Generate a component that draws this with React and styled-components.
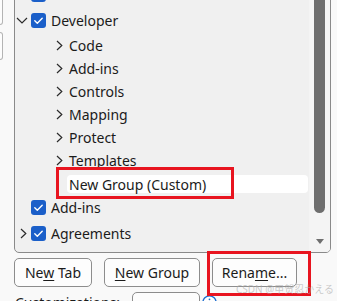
import React from 'react';
import styled, { createGlobalStyle } from 'styled-components';

const GlobalStyle = createGlobalStyle`
  html, body { margin: 0; padding: 0; background: #f9f9f9; }
  body { font-family: "Noto Sans", "Segoe UI", sans-serif; color: #1b1b1b; }
  * { box-sizing: border-box; }
`;

const Page = styled.div`
  position: relative;
  width: 337px;
  height: 301px;
  overflow: hidden;
  display: flex;
  flex-direction: column;
`;

const TopRow = styled.div`
  display: flex;
  align-items: flex-start;
`;

const LeftRail = styled.div`
  width: 14px;
  flex: none;
  display: flex;
  flex-direction: column;
  gap: 7px;
`;

const Stub = styled.div`
  width: 3px;
  height: ${p => p.$h}px;
  margin-top: ${p => p.$mt || 0}px;
  border: 1px solid #b4b4b4;
  border-left: none;
  border-radius: 0 4px 4px 0;
  background: #fdfdfd;
`;

const ListBox = styled.div`
  width: 317px;
  height: 273px;
  margin-top: -20px;
  border: 1px solid #8a8a8a;
  border-radius: 0 0 5px 5px;
  background: #f0f0f0;
  display: flex;
  overflow: hidden;
`;

const Tree = styled.div`
  flex: 1;
  display: flex;
  flex-direction: column;
  overflow: hidden;
`;

const Row = styled.div`
  flex: none;
  height: ${p => p.$h}px;
  display: flex;
  align-items: center;
  padding-left: ${p => p.$indent}px;
  font-size: 14px;
  white-space: nowrap;
  margin-top: ${p => p.$mt || 0}px;
`;

const Highlight = styled.div`
  flex: 1;
  align-self: stretch;
  margin: 3px 1px 2px 0;
  padding-left: 2px;
  background: #ffffff;
  border-radius: 4px;
  display: flex;
  align-items: center;
`;

const ChevronSlot = styled.span`
  width: ${p => p.$w}px;
  flex: none;
  display: flex;
  align-items: center;
  justify-content: ${p => p.$justify || 'flex-start'};
`;

const Check = styled.span`
  width: 15px;
  height: 15px;
  border-radius: 3px;
  background: #1b5fc9;
  display: inline-flex;
  align-items: center;
  justify-content: center;
  flex: none;
  margin-right: 5px;
`;

const Scrollbar = styled.div`
  width: 21px;
  flex: none;
  background: #f4f4f4;
  display: flex;
  flex-direction: column;
  padding-left: 5px;
`;

const Thumb = styled.div`
  width: 11px;
  height: 232px;
  background: #6e6e6e;
  border-radius: 6px;
`;

const ArrowSlot = styled.div`
  width: 11px;
  margin-top: 26px;
  display: flex;
  justify-content: center;
`;

const ButtonRow = styled.div`
  display: flex;
  gap: 12px;
  padding-left: 14px;
  margin-top: 5px;
`;

const Button = styled.button`
  height: 29px;
  width: ${p => p.$w}px;
  border: 1px solid #8d8d8d;
  border-radius: 5px;
  background: #fdfdfd;
  font-family: "Noto Sans", sans-serif;
  font-size: 14px;
  color: #1b1b1b;
  padding: 0;
  u { text-decoration-thickness: 1px; text-underline-offset: 2px; }
`;

const BottomRow = styled.div`
  display: flex;
  align-items: flex-start;
  margin-top: 5px;
  padding-left: 15px;
`;

const Label = styled.span`
  font-size: 14px;
  line-height: 20px;
  margin-top: 1px;
  width: 117px;
`;

const Dropdown = styled.div`
  width: 68px;
  height: 29px;
  border: 1px solid #8d8d8d;
  border-radius: 5px;
  background: #fdfdfd;
`;

const InfoSlot = styled.div`
  margin-left: 2px;
  margin-top: 1px;
  width: 15px;
  height: 15px;
`;

const Annotation = styled.div`
  position: absolute;
  left: ${p => p.$x}px;
  top: ${p => p.$y}px;
  width: ${p => p.$w}px;
  height: ${p => p.$h}px;
  border: 3px solid #e8141f;
  pointer-events: none;
`;

const Watermark = styled.div`
  position: absolute;
  left: 236px;
  top: 282px;
  font-family: "Noto Sans", "Noto Sans CJK SC", sans-serif;
  font-size: 10px;
  line-height: 14px;
  color: rgba(170, 170, 170, 0.6);
  white-space: nowrap;
`;

const DownChevron = () => (
  <svg width="12" height="7" viewBox="0 0 12 7">
    <path d="M1 1 L6 6 L11 1" fill="none" stroke="#2b2b2b" strokeWidth="1.2" />
  </svg>
);

const RightChevron = () => (
  <svg width="7" height="11" viewBox="0 0 7 11">
    <path d="M1 1 L5.8 5.5 L1 10" fill="none" stroke="#2b2b2b" strokeWidth="1.2" />
  </svg>
);

const CheckMark = () => (
  <svg width="15" height="15" viewBox="0 0 15 15">
    <path d="M3.8 7.8 L6.3 10.2 L11.2 5.2" fill="none" stroke="#fff" strokeWidth="1.4" strokeLinecap="round" strokeLinejoin="round" />
  </svg>
);

const TopItem = ({ label, expand, h = 26, mt }) => (
  <Row $h={h} $indent={1} $mt={mt}>
    <ChevronSlot $w={15} $justify={expand === 'right' ? 'center' : 'flex-start'}>
      {expand === 'down' && <DownChevron />}
      {expand === 'right' && <RightChevron />}
    </ChevronSlot>
    <Check><CheckMark /></Check>
    {label && <span>{label}</span>}
  </Row>
);

const ChildItem = ({ label }) => (
  <Row $h={23} $indent={41}>
    <ChevronSlot $w={13}><RightChevron /></ChevronSlot>
    <span>{label}</span>
  </Row>
);

const children = ['Code', 'Add-ins', 'Controls', 'Mapping', 'Protect', 'Templates'];

export default function App() {
  return (
    <>
      <GlobalStyle />
      <Page>
        <TopRow>
          <LeftRail>
            <Stub $h={35} $mt={-10} />
            <Stub $h={28} />
          </LeftRail>
          <ListBox>
            <Tree>
              <TopItem expand="right" />
              <TopItem label="Developer" expand="down" />
              <Row $h={1} />
              {children.map(c => <ChildItem key={c} label={c} />)}
              <Row $h={23} $indent={52}>
                <Highlight>New Group (Custom)</Highlight>
              </Row>
              <TopItem label="Add-ins" h={25} />
              <TopItem label="Agreements" expand="right" />
            </Tree>
            <Scrollbar>
              <Thumb />
              <ArrowSlot>
                <svg width="8" height="6" viewBox="0 0 8 6">
                  <path d="M0 0 L8 0 L4 5 Z" fill="#6e6e6e" />
                </svg>
              </ArrowSlot>
            </Scrollbar>
          </ListBox>
        </TopRow>
        <ButtonRow>
          <Button $w={78}>Ne<u>w</u> Tab</Button>
          <Button $w={96}><u>N</u>ew Group</Button>
          <Button $w={85}>Rena<u>m</u>e...</Button>
        </ButtonRow>
        <BottomRow>
          <Label>Customizations:</Label>
          <Dropdown />
          <InfoSlot>
            <svg width="15" height="15" viewBox="0 0 15 15">
              <circle cx="7.5" cy="7.5" r="6.6" fill="#fff" stroke="#1f6fd0" strokeWidth="1.4" />
              <circle cx="7.5" cy="4.3" r="0.9" fill="#1f6fd0" />
              <rect x="6.8" y="6.2" width="1.4" height="5" fill="#1f6fd0" />
            </svg>
          </InfoSlot>
        </BottomRow>
        <Annotation $x={56} $y={167} $w={178} $h={32} />
        <Annotation $x={207} $y={251} $w={104} $h={45} />
        <Watermark>CSDN @甲贺忍かえる</Watermark>
      </Page>
    </>
  );
}
